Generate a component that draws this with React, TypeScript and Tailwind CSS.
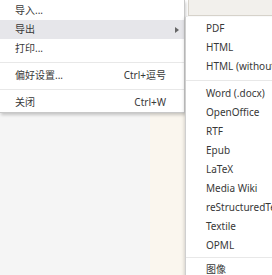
const font = "font-['Noto_Sans','Noto_Sans_CJK_SC',sans-serif]";

type Item = { label: string; shortcut?: string; arrow?: boolean; active?: boolean } | "sep";

const mainItems: Item[] = [
  { label: "导入..." },
  { label: "导出", arrow: true, active: true },
  { label: "打印..." },
  "sep",
  { label: "偏好设置...", shortcut: "Ctrl+逗号" },
  "sep",
  { label: "关闭", shortcut: "Ctrl+W" },
];

const exportItems: Item[] = [
  { label: "PDF" },
  { label: "HTML" },
  { label: "HTML (without styles)" },
  "sep",
  { label: "Word (.docx)" },
  { label: "OpenOffice" },
  { label: "RTF" },
  { label: "Epub" },
  { label: "LaTeX" },
  { label: "Media Wiki" },
  { label: "reStructuredText" },
  { label: "Textile" },
  { label: "OPML" },
  "sep",
  { label: "图像" },
];

const MenuRow = ({ item, sub, first }: { item: Item; sub?: boolean; first?: boolean }) => {
  if (item === "sep") {
    return (
      <div className={`${sub && !first ? "h-[5px]" : "h-[8px]"} flex items-center`}>
        <div className="h-px w-full bg-[#e8e8e8]" />
      </div>
    );
  }
  return (
    <div
      className={`h-[19px] flex items-center whitespace-nowrap ${sub ? "pl-[20px]" : "pl-[15px] pr-[18px]"} ${
        item.active ? "bg-[#e6e6ea]" : ""
      }`}
    >
      <span className="flex-1">{item.label}</span>
      {item.shortcut && <span>{item.shortcut}</span>}
      {item.arrow && (
        <svg width="4" height="6" viewBox="0 0 4 6" className="mr-[-13px]">
          <path d="M0 0 L4 3 L0 6 Z" fill="#666" />
        </svg>
      )}
    </div>
  );
};

export default function App() {
  return (
    <div className={`relative w-[272px] h-[275px] overflow-hidden bg-[#f4f4f4] text-[10px] text-[#383838] ${font}`}>
      <div className="flex h-full">
        <div className="w-[150px] bg-[#f5f5f5]" />
        <div className="w-[35px] bg-[#faf6ee]" />
        <div className="flex-1 bg-white flex flex-col">
          <div className="h-[16px] ml-[3px] bg-[#f2f0ec] border-l border-b border-[#d8d4cc]" />
        </div>
      </div>

      <div className="absolute left-0 top-0 w-[185px] bg-white pt-[1px] border-b border-r border-[#c8c8c8] shadow-[1px_2px_3px_rgba(0,0,0,0.2)]">
        {mainItems.map((item, i) => (
          <MenuRow key={i} item={item} />
        ))}
      </div>

      <div className="absolute left-[185px] top-[17px] w-[120px] bg-white pt-[2px] border-l border-[#cfcfcf] shadow-[-1px_1px_3px_rgba(0,0,0,0.15)]">
        {exportItems.map((item, i) => (
          <MenuRow key={i} item={item} sub first={i === 3} />
        ))}
      </div>
    </div>
  );
}
